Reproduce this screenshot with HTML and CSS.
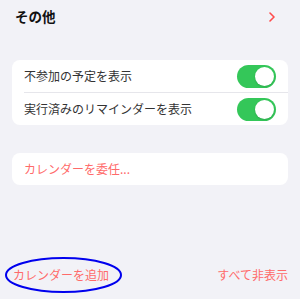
FILE: index.html
```html
<!DOCTYPE html>
<html lang="ja">
<head>
<meta charset="utf-8">
<link rel="stylesheet" href="styles.css">
</head>
<body>
<div class="page">
  <div class="header">
    <span class="title">その他</span>
    <svg class="chevron" width="6" height="10" viewBox="0 0 6 10"><path d="M1 1 L5 5 L1 9" fill="none" stroke="#ff4b4b" stroke-width="1.6" stroke-linecap="round" stroke-linejoin="round"/></svg>
  </div>
  <div class="card toggles">
    <div class="row">
      <span class="label">不参加の予定を表示</span>
      <span class="switch"><span class="knob"></span></span>
    </div>
    <div class="divider"></div>
    <div class="row">
      <span class="label">実行済みのリマインダーを表示</span>
      <span class="switch"><span class="knob"></span></span>
    </div>
  </div>
  <div class="card delegate">
    <span class="link">カレンダーを委任...</span>
  </div>
  <div class="footer">
    <span class="link add">カレンダーを追加
      <svg class="circle" width="119" height="38" viewBox="0 0 119 38"><ellipse cx="59.5" cy="19" rx="57.5" ry="17" fill="none" stroke="#0000ee" stroke-width="2"/></svg>
    </span>
    <span class="link">すべて非表示</span>
  </div>
</div>
</body>
</html>
```
FILE: styles.css
```css
html, body {
  margin: 0;
  padding: 0;
  background: #f2f2f7;
}
body {
  font-family: "Noto Sans CJK JP", "Noto Sans", sans-serif;
}
.page {
  height: 299px;
  display: flex;
  flex-direction: column;
  padding: 0 12px;
  box-sizing: border-box;
}
.header {
  height: 34px;
  display: flex;
  align-items: center;
  justify-content: space-between;
  padding: 0 13px 0 3px;
}
.title {
  font-size: 13.5px;
  font-weight: 700;
  color: #111;
  line-height: 1;
}
.chevron {
  display: block;
}
.card {
  background: #fff;
  border-radius: 8px;
}
.toggles {
  margin-top: 26px;
}
.row {
  height: 32px;
  display: flex;
  align-items: center;
  justify-content: space-between;
  padding: 0 12px;
}
.label {
  font-size: 12px;
  color: #333;
  line-height: 1;
}
.divider {
  height: 1px;
  background: #e6e6eb;
  margin-left: 12px;
}
.switch {
  width: 39px;
  height: 23px;
  border-radius: 12px;
  background: #34c759;
  position: relative;
  display: block;
}
.knob {
  position: absolute;
  right: 2px;
  top: 2px;
  width: 19px;
  height: 19px;
  border-radius: 50%;
  background: #fff;
  box-shadow: 0 1px 2px rgba(0,0,0,0.15);
}
.delegate {
  margin-top: 28px;
  height: 32px;
  display: flex;
  align-items: center;
  padding: 0 12px;
}
.link {
  font-size: 12px;
  color: #ff6a6a;
  line-height: 1;
}
.footer {
  margin-top: auto;
  height: 20px;
  margin-bottom: 14px;
  display: flex;
  align-items: center;
  justify-content: space-between;
  padding: 0 0 0 1px;
}
.add {
  position: relative;
}
.circle {
  position: absolute;
  left: -9px;
  top: -13px;
}
```
